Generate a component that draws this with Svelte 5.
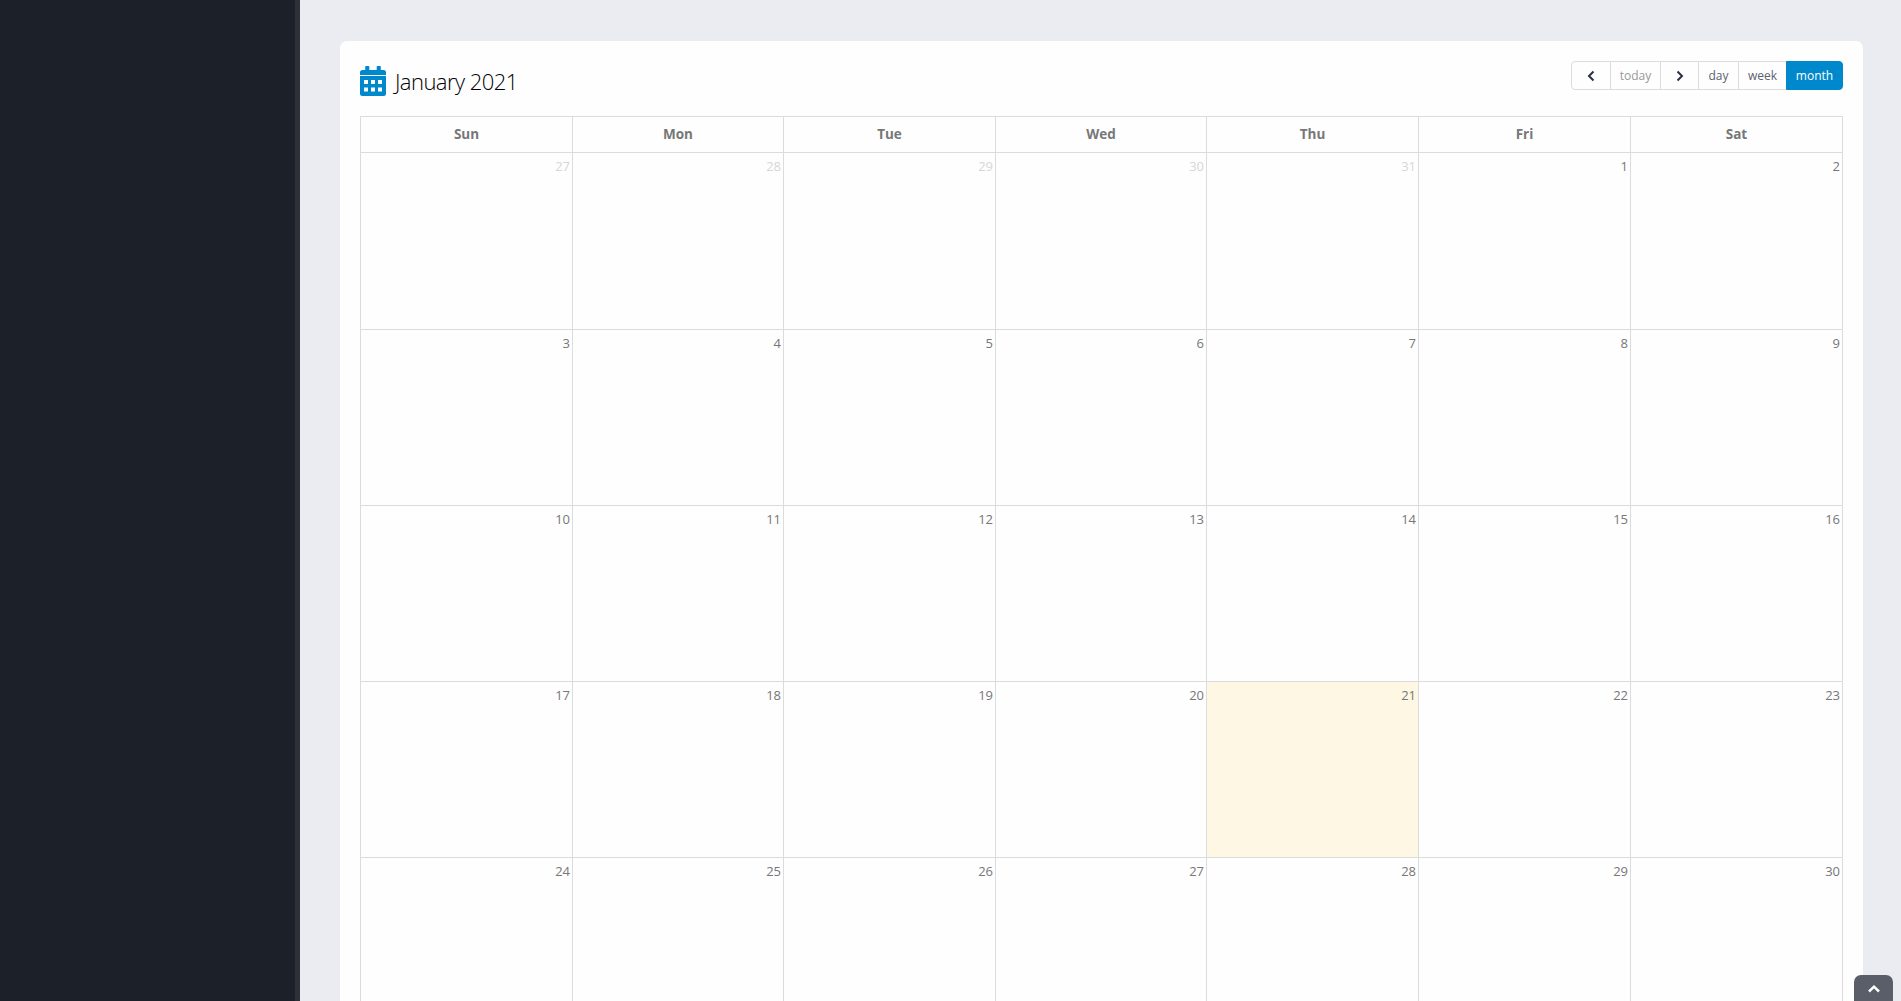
<script>
  const days = ['Sun', 'Mon', 'Tue', 'Wed', 'Thu', 'Fri', 'Sat'];
  const today = 21;

  // 27 Dec 2020 .. 30 Jan 2021, split in weeks
  const prev = [27, 28, 29, 30, 31].map((n) => ({ n, other: true }));
  const current = Array.from({ length: 30 }, (_, i) => ({ n: i + 1, other: false }));
  const cells = [...prev, ...current];
  const weeks = [];
  for (let i = 0; i < cells.length; i += 7) {
    weeks.push(cells.slice(i, i + 7));
  }
</script>

<div class="layout">
  <aside class="sidebar"></aside>

  <main class="content">
    <section class="card">
      <header class="toolbar">
        <h2 class="title">
          <svg class="cal-icon" viewBox="0 0 26 30" aria-hidden="true">
            <path
              fill="#0088cc"
              d="M6 0h2.500a.8.8 0 0 1 .8.8V4h7.400V.8a.8.8 0 0 1 .8-.8H20a.8.8 0 0 1 .8.8V4h2.700A2.500 2.500 0 0 1 26 6.500V9H0V6.500A2.500 2.500 0 0 1 2.500 4h2.700V.8A.8.8 0 0 1 6 0zM0 10h26v17.500A2.500 2.500 0 0 1 23.500 30h-21A2.500 2.500 0 0 1 0 27.500z"
            />
            <g fill="#fff">
              <rect x="4" y="14" width="4" height="4" />
              <rect x="11" y="14" width="4" height="4" />
              <rect x="18" y="14" width="4" height="4" />
              <rect x="4" y="21.500" width="4" height="4" />
              <rect x="11" y="21.500" width="4" height="4" />
              <rect x="18" y="21.500" width="4" height="4" />
            </g>
          </svg>
          January 2021
        </h2>

        <div class="buttons">
          <button class="btn arrow prev" aria-label="prev">
            <svg viewBox="0 0 10 12"><path d="M7.500 1.500 3 6l4.500 4.500" /></svg>
          </button>
          <button class="btn today">today</button>
          <button class="btn arrow next" aria-label="next">
            <svg viewBox="0 0 10 12"><path d="M2.500 1.500 7 6l-4.500 4.500" /></svg>
          </button>
          <button class="btn day">day</button>
          <button class="btn week">week</button>
          <button class="btn active">month</button>
        </div>
      </header>

      <table class="calendar">
        <thead>
          <tr>
            {#each days as day}
              <th>{day}</th>
            {/each}
          </tr>
        </thead>
        <tbody>
          {#each weeks as week}
            <tr>
              {#each week as cell}
                <td class:other={cell.other} class:today={!cell.other && cell.n === today}>
                  <span class="num">{cell.n}</span>
                </td>
              {/each}
            </tr>
          {/each}
        </tbody>
      </table>
    </section>
  </main>

  <button class="to-top" aria-label="Back to top">
    <svg viewBox="0 0 14 10"><path d="M2 7.500 7 2.700l5 4.800" /></svg>
  </button>
</div>

<style>
  :global(body) {
    margin: 0;
    background: #ebecf1;
    font-family: 'Open Sans', 'Liberation Sans', sans-serif;
    overflow: hidden;
  }

  .layout {
    display: flex;
    height: 100vh;
    overflow: hidden;
  }

  .sidebar {
    flex: 0 0 295px;
    background: #1c2029;
    border-right: 5px solid #2c3039;
  }

  .content {
    flex: 1;
    padding: 41px 38px 0 40px;
    min-width: 0;
  }

  .card {
    background: #fefefe;
    border-radius: 7px;
    padding: 20px;
  }

  .toolbar {
    display: flex;
    justify-content: space-between;
    align-items: flex-start;
    height: 55px;
  }

  .title {
    display: flex;
    align-items: center;
    gap: 9px;
    margin: 5px 0 0;
    height: 30px;
    font-size: 22px;
    font-weight: 300;
    letter-spacing: -0.55px;
    color: #000;
  }

  .cal-icon {
    width: 26px;
    height: 30px;
  }

  .buttons {
    display: flex;
    height: 29px;
  }

  .btn {
    height: 29px;
    padding: 0;
    margin-left: -1px;
    border: 1px solid #dcdcdc;
    background: #fefefe;
    color: #5b6270;
    font: 400 12px 'Open Sans', sans-serif;
  }

  .btn.prev {
    width: 40px;
  }

  .btn.today {
    width: 51px;
    color: #999;
  }

  .btn.next {
    width: 39px;
  }

  .btn.day {
    width: 41px;
  }

  .btn.week {
    width: 49px;
  }

  .btn.arrow {
    display: flex;
    align-items: center;
    justify-content: center;
  }

  .btn:first-child {
    margin-left: 0;
    border-radius: 4px 0 0 4px;
  }

  .btn.arrow svg {
    width: 10px;
    height: 12px;
    fill: none;
    stroke: #2a3140;
    stroke-width: 2;
  }

  .btn.active {
    width: 57px;
    background: #0088cc;
    border-color: #0088cc;
    color: #fff;
    border-radius: 0 4px 4px 0;
  }

  .calendar {
    width: 100%;
    table-layout: fixed;
    border-collapse: collapse;
  }

  th,
  td {
    border: 1px solid #dcdcdc;
    padding: 0;
  }

  th {
    height: 33px;
    padding-bottom: 2px;
    font-size: 13.5px;
    font-weight: 700;
    color: #777;
  }

  th:not(:last-child) {
    width: 211px;
  }

  th:nth-child(2),
  th:nth-child(4) {
    width: 210px;
  }

  td {
    height: 175px;
    vertical-align: top;
    text-align: right;
    font-size: 13px;
    color: #777;
  }

  tbody tr:first-child td {
    height: 176px;
  }

  td .num {
    display: block;
    padding: 4px 2px 0 0;
    line-height: 18px;
  }

  td.other {
    color: #d6d6d6;
  }

  td.today {
    background: #fdf7e3;
  }

  .to-top {
    position: fixed;
    right: 8px;
    bottom: -20px;
    width: 39px;
    height: 46px;
    padding: 0 0 18px;
    border: 0;
    border-radius: 7px;
    background: #5a5e68;
    display: flex;
    align-items: center;
    justify-content: center;
  }

  .to-top svg {
    width: 14px;
    height: 10px;
    fill: none;
    stroke: #fff;
    stroke-width: 2.500;
  }
</style>
